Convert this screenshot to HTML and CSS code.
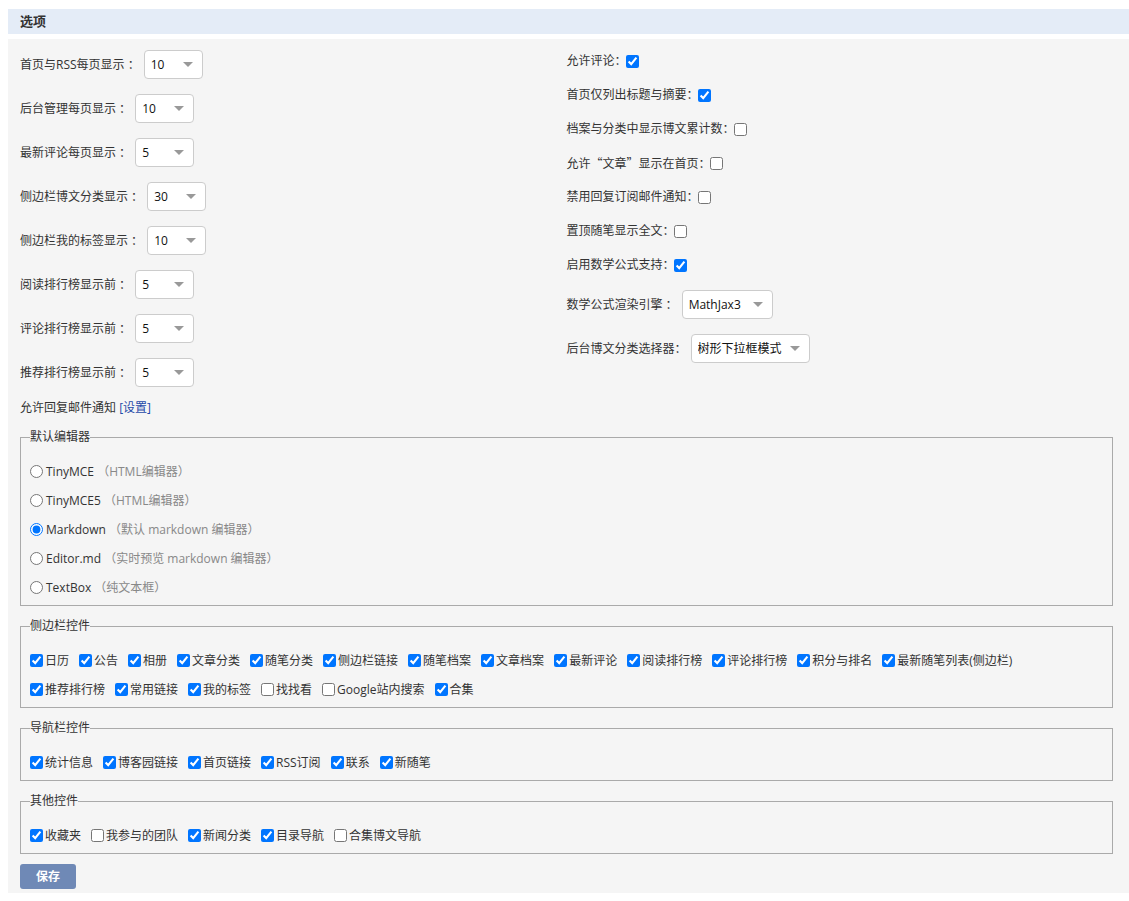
FILE: index.html
```html
<!DOCTYPE html>
<html lang="zh-CN">
<head>
<meta charset="utf-8">
<title>选项</title>
<link rel="stylesheet" href="styles.css">
</head>
<body>
<div class="page">
  <div class="title">选项</div>
  <div class="panel">
    <div class="cols">
      <div class="col-left">
        <div class="sel-rows">
          <div class="sel-row"><span>首页与RSS每页显示 ：</span><span class="select-wrap"><select class="sel w-num"><option>10</option></select></span></div>
          <div class="sel-row"><span>后台管理每页显示 ：</span><span class="select-wrap"><select class="sel w-num"><option>10</option></select></span></div>
          <div class="sel-row"><span>最新评论每页显示 ：</span><span class="select-wrap"><select class="sel w-num"><option>5</option></select></span></div>
          <div class="sel-row"><span>侧边栏博文分类显示 ：</span><span class="select-wrap"><select class="sel w-num"><option>30</option></select></span></div>
          <div class="sel-row"><span>侧边栏我的标签显示 ：</span><span class="select-wrap"><select class="sel w-num"><option>10</option></select></span></div>
          <div class="sel-row"><span>阅读排行榜显示前 ：</span><span class="select-wrap"><select class="sel w-num"><option>5</option></select></span></div>
          <div class="sel-row"><span>评论排行榜显示前 ：</span><span class="select-wrap"><select class="sel w-num"><option>5</option></select></span></div>
          <div class="sel-row"><span>推荐排行榜显示前 ：</span><span class="select-wrap"><select class="sel w-num"><option>5</option></select></span></div>
        </div>
        <div class="notice">允许回复邮件通知 <a class="link" href="#">[设置]</a></div>
      </div>
      <div class="col-right">
        <div class="chk-rows">
          <label class="chk-row"><span>允许评论：</span><input type="checkbox" class="chk-r" checked></label>
          <label class="chk-row"><span>首页仅列出标题与摘要：</span><input type="checkbox" class="chk-r" checked></label>
          <label class="chk-row"><span>档案与分类中显示博文累计数：</span><input type="checkbox" class="chk-r"></label>
          <label class="chk-row"><span>允许<span class="cjk">“</span>文章<span class="cjk">”</span>显示在首页：</span><input type="checkbox" class="chk-r"></label>
          <label class="chk-row"><span>禁用回复订阅邮件通知：</span><input type="checkbox" class="chk-r"></label>
          <label class="chk-row"><span>置顶随笔显示全文：</span><input type="checkbox" class="chk-r"></label>
          <label class="chk-row"><span>启用数学公式支持：</span><input type="checkbox" class="chk-r" checked></label>
        </div>
        <div class="sel-rows right-sels">
          <div class="sel-row"><span>数学公式渲染引擎 ：</span><span class="select-wrap"><select class="sel w-math"><option>MathJax3</option></select></span></div>
          <div class="sel-row"><span>后台博文分类选择器：</span><span class="select-wrap"><select class="sel w-tree"><option>树形下拉框模式</option></select></span></div>
        </div>
      </div>
    </div>

    <fieldset class="group first">
      <legend>默认编辑器</legend>
      <div class="opt-row"><label class="opt"><input type="radio" name="editor" class="rad">TinyMCE <span class="hint">（HTML编辑器）</span></label></div>
      <div class="opt-row"><label class="opt"><input type="radio" name="editor" class="rad">TinyMCE5 <span class="hint">（HTML编辑器）</span></label></div>
      <div class="opt-row"><label class="opt"><input type="radio" name="editor" class="rad" checked>Markdown <span class="hint">（默认 markdown 编辑器）</span></label></div>
      <div class="opt-row"><label class="opt"><input type="radio" name="editor" class="rad">Editor.md <span class="hint">（实时预览 markdown 编辑器）</span></label></div>
      <div class="opt-row"><label class="opt"><input type="radio" name="editor" class="rad">TextBox <span class="hint">（纯文本框）</span></label></div>
    </fieldset>

    <fieldset class="group">
      <legend>侧边栏控件</legend>
      <div class="opt-row">
        <label class="opt"><input type="checkbox" class="chk" checked>日历</label>
        <label class="opt"><input type="checkbox" class="chk" checked>公告</label>
        <label class="opt"><input type="checkbox" class="chk" checked>相册</label>
        <label class="opt"><input type="checkbox" class="chk" checked>文章分类</label>
        <label class="opt"><input type="checkbox" class="chk" checked>随笔分类</label>
        <label class="opt"><input type="checkbox" class="chk" checked>侧边栏链接</label>
        <label class="opt"><input type="checkbox" class="chk" checked>随笔档案</label>
        <label class="opt"><input type="checkbox" class="chk" checked>文章档案</label>
        <label class="opt"><input type="checkbox" class="chk" checked>最新评论</label>
        <label class="opt"><input type="checkbox" class="chk" checked>阅读排行榜</label>
        <label class="opt"><input type="checkbox" class="chk" checked>评论排行榜</label>
        <label class="opt"><input type="checkbox" class="chk" checked>积分与排名</label>
        <label class="opt"><input type="checkbox" class="chk" checked>最新随笔列表(侧边栏)</label>
      </div>
      <div class="opt-row">
        <label class="opt"><input type="checkbox" class="chk" checked>推荐排行榜</label>
        <label class="opt"><input type="checkbox" class="chk" checked>常用链接</label>
        <label class="opt"><input type="checkbox" class="chk" checked>我的标签</label>
        <label class="opt"><input type="checkbox" class="chk">找找看</label>
        <label class="opt"><input type="checkbox" class="chk">Google站内搜索</label>
        <label class="opt"><input type="checkbox" class="chk" checked>合集</label>
      </div>
    </fieldset>

    <fieldset class="group">
      <legend>导航栏控件</legend>
      <div class="opt-row">
        <label class="opt"><input type="checkbox" class="chk" checked>统计信息</label>
        <label class="opt"><input type="checkbox" class="chk" checked>博客园链接</label>
        <label class="opt"><input type="checkbox" class="chk" checked>首页链接</label>
        <label class="opt"><input type="checkbox" class="chk" checked>RSS订阅</label>
        <label class="opt"><input type="checkbox" class="chk" checked>联系</label>
        <label class="opt"><input type="checkbox" class="chk" checked>新随笔</label>
      </div>
    </fieldset>

    <fieldset class="group">
      <legend>其他控件</legend>
      <div class="opt-row">
        <label class="opt"><input type="checkbox" class="chk" checked>收藏夹</label>
        <label class="opt"><input type="checkbox" class="chk">我参与的团队</label>
        <label class="opt"><input type="checkbox" class="chk" checked>新闻分类</label>
        <label class="opt"><input type="checkbox" class="chk" checked>目录导航</label>
        <label class="opt"><input type="checkbox" class="chk">合集博文导航</label>
      </div>
    </fieldset>

    <button class="save" type="button">保存</button>
  </div>
</div>
</body>
</html>
```
FILE: styles.css
```css
html, body {
  margin: 0;
  padding: 0;
  background: #ffffff;
}

body {
  font-family: "Open Sans", "Noto Sans CJK SC", sans-serif;
  font-size: 12px;
  line-height: 20px;
  color: #333333;
}

.cjk {
  font-family: "Noto Sans CJK SC", sans-serif;
}

.page {
  padding: 9px 0 0 8px;
}

.title {
  height: 25px;
  line-height: 25px;
  background: #e4ecf7;
  padding-left: 12px;
  font-size: 13px;
  font-weight: bold;
  color: #333333;
}

.panel {
  margin-top: 5px;
  background: #f5f5f5;
  padding: 0 16px 4px 12px;
}

.cols {
  display: grid;
  grid-template-columns: 1fr 1fr;
}

.col-left {
  padding-top: 11px;
}

.col-right {
  padding-top: 5px;
}

.sel-rows {
  display: flex;
  flex-direction: column;
  gap: 15px;
}

.sel-row {
  display: flex;
  align-items: center;
  height: 29px;
  white-space: pre;
}

.select-wrap {
  position: relative;
  display: inline-block;
  margin-left: 4px;
  height: 29px;
}

.select-wrap::after {
  content: "";
  position: absolute;
  right: 10px;
  top: 12px;
  width: 0;
  height: 0;
  border-left: 5px solid transparent;
  border-right: 5px solid transparent;
  border-top: 5px solid #999999;
  pointer-events: none;
}

.sel {
  -webkit-appearance: none;
  appearance: none;
  box-sizing: border-box;
  height: 29px;
  margin: 0;
  border: 1px solid #cccccc;
  border-radius: 4px;
  background: #ffffff;
  padding: 0 0 0 6px;
  font-family: "Open Sans", "Noto Sans CJK SC", sans-serif;
  font-size: 12px;
  color: #111111;
  outline: none;
}

.w-num { width: 59px; }
.w-math { width: 91px; }
.w-tree { width: 119px; }

.notice {
  margin-top: 11px;
  line-height: 20px;
}

.link {
  color: #1f4aa8;
  text-decoration: none;
}

.chk-rows {
  display: flex;
  flex-direction: column;
}

.chk-row {
  display: flex;
  align-items: center;
  height: 34px;
}

.chk-r {
  width: 13px;
  height: 13px;
  margin: 0 0 0 -1px;
}

.right-sels {
  margin-top: 8px;
}

.group {
  margin: 12px 0 0 0;
  padding: 12px 9px 3px 9px;
  border: 1px solid #aaaaaa;
  min-width: 0;
}

.group.first {
  margin-top: 11px;
}

.group legend {
  padding: 0;
  line-height: 16px;
  font-size: 12px;
  color: #333333;
}

.opt-row {
  display: flex;
  align-items: center;
  height: 29px;
  white-space: nowrap;
}

.opt {
  display: inline-flex;
  align-items: center;
  margin-right: 10px;
  white-space: pre;
}

.chk {
  width: 13px;
  height: 13px;
  margin: 0 2px 0 0;
}

.rad {
  width: 13px;
  height: 13px;
  margin: 0 3px 0 0;
}

.hint {
  color: #888888;
}

.save {
  display: block;
  margin-top: 10px;
  width: 56px;
  height: 25px;
  padding: 0;
  border: none;
  border-radius: 3px;
  background: #6f89b6;
  color: #ffffff;
  font-family: "Open Sans", "Noto Sans CJK SC", sans-serif;
  font-size: 12px;
  font-weight: bold;
  line-height: 25px;
}
```
